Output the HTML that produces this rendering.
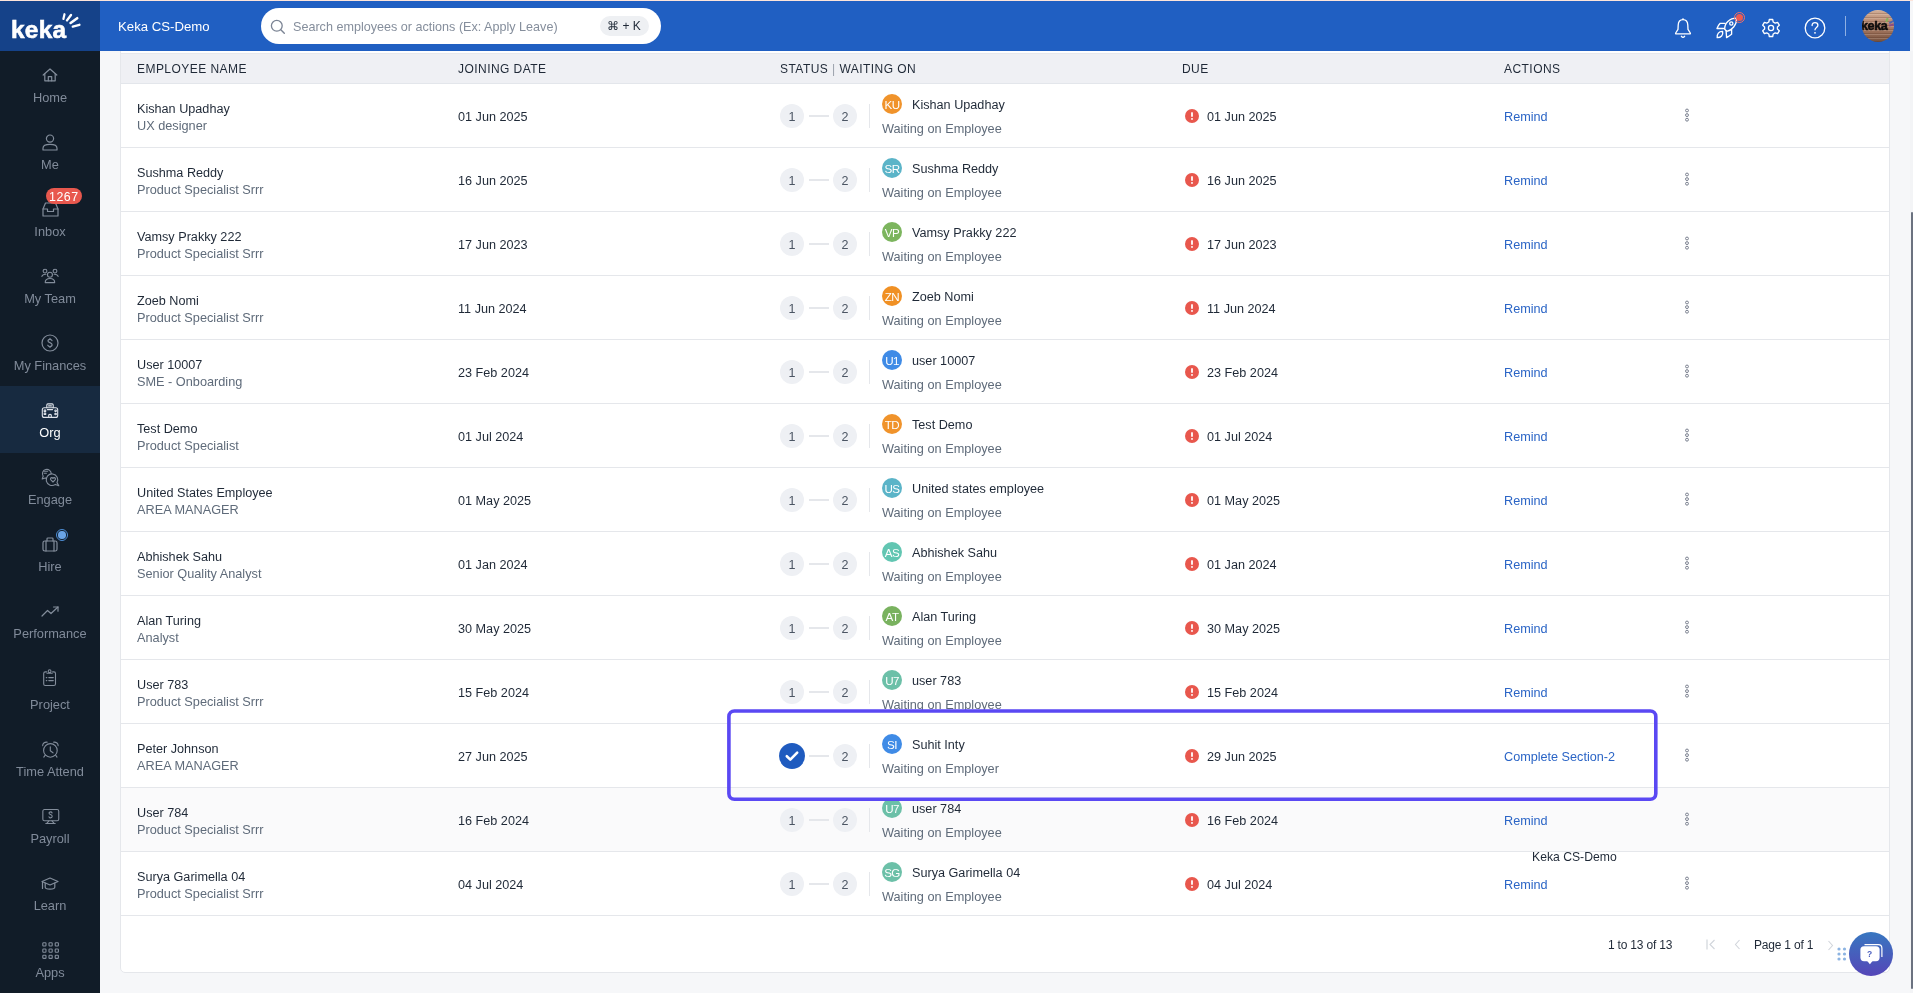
<!DOCTYPE html><html><head><meta charset="utf-8"><title>Keka</title><style>
*{box-sizing:border-box;margin:0;padding:0}
html,body{width:1913px;height:993px;overflow:hidden}
body{position:relative;background:#f6f7f9;font-family:"Liberation Sans", sans-serif}
.t{position:absolute;white-space:nowrap}
.a{position:absolute}
svg{position:absolute;overflow:visible}
</style></head><body><div id="root" style="position:absolute;left:0;top:0;width:1913px;height:993px;will-change:transform">
<div class="a" style="left:120px;top:40px;width:1770px;height:933px;background:#fff;border:1px solid #e5e7eb;border-radius:5px"></div>
<div class="a" style="left:121px;top:53px;width:1768px;height:31px;background:#eff0f4;border-top:1px solid #e6e8ec;border-bottom:1px solid #e3e6eb"></div>
<div class="t" style="left:137px;top:60.74px;font-size:12px;line-height:16px;color:#1f2937;font-weight:400;letter-spacing:0.45px;">EMPLOYEE NAME</div>
<div class="t" style="left:458px;top:60.74px;font-size:12px;line-height:16px;color:#1f2937;font-weight:400;letter-spacing:0.45px;">JOINING DATE</div>
<div class="t" style="left:780px;top:60.74px;font-size:12px;line-height:16px;color:#1f2937;font-weight:400;letter-spacing:0.45px;">STATUS <span style="color:#9aa1ab">|</span> WAITING ON</div>
<div class="t" style="left:1182px;top:60.74px;font-size:12px;line-height:16px;color:#1f2937;font-weight:400;letter-spacing:0.45px;">DUE</div>
<div class="t" style="left:1504px;top:60.74px;font-size:12px;line-height:16px;color:#1f2937;font-weight:400;letter-spacing:0.45px;">ACTIONS</div>
<div class="a" style="left:121px;top:84px;width:1768px;height:64px;background:#fff;border-bottom:1px solid #e5e7eb"></div>
<div class="t" style="left:137px;top:100.62px;font-size:12.65px;line-height:16px;color:#1f2937;font-weight:400;letter-spacing:0px;">Kishan Upadhay</div>
<div class="t" style="left:137px;top:116.89px;font-size:12.72px;line-height:17px;color:#5f6b7a;font-weight:400;letter-spacing:0px;">UX designer</div>
<div class="t" style="left:458px;top:108.62px;font-size:12.65px;line-height:16px;color:#1f2937;font-weight:400;letter-spacing:0px;">01 Jun 2025</div>
<div class="a" style="left:780px;top:104px;width:24px;height:24px;border-radius:50%;background:#eef0f4"></div>
<div class="t" style="left:642px;width:300px;text-align:center;top:108.77px;font-size:12.5px;line-height:16px;color:#4b5563;font-weight:400;letter-spacing:0px;">1</div>
<div class="a" style="left:809px;top:115px;width:20px;height:2px;background:#e5e7eb"></div>
<div class="a" style="left:833px;top:104px;width:24px;height:24px;border-radius:50%;background:#eef0f4"></div>
<div class="t" style="left:695px;width:300px;text-align:center;top:108.77px;font-size:12.5px;line-height:16px;color:#4b5563;font-weight:400;letter-spacing:0px;">2</div>
<div class="a" style="left:869px;top:104px;width:1px;height:24px;background:#e5e7eb"></div>
<div class="a" style="left:882px;top:94px;width:20px;height:20px;border-radius:50%;background:#f0932b"></div>
<div class="t" style="left:742px;width:300px;text-align:center;top:96.88px;font-size:11.6px;line-height:15px;color:#fff;font-weight:400;letter-spacing:-0.6px;">KU</div>
<div class="t" style="left:912px;top:96.92px;font-size:12.65px;line-height:16px;color:#1f2937;font-weight:400;letter-spacing:0px;">Kishan Upadhay</div>
<div class="t" style="left:882px;top:120.19px;font-size:12.72px;line-height:17px;color:#5f6b7a;font-weight:400;letter-spacing:0px;">Waiting on Employee</div>
<svg style="left:1185px;top:109px" width="14" height="14" viewBox="0 0 14 14"><circle cx="7" cy="7" r="7" fill="#e8574d"/><rect x="6.1" y="3.2" width="1.8" height="4.6" rx="0.4" fill="#fff"/><rect x="6.1" y="9" width="1.8" height="1.8" rx="0.4" fill="#fff"/></svg>
<div class="t" style="left:1207px;top:108.62px;font-size:12.65px;line-height:16px;color:#1f2937;font-weight:400;letter-spacing:0px;">01 Jun 2025</div>
<div class="t" style="left:1504px;top:108.62px;font-size:12.65px;line-height:16px;color:#2b65c6;font-weight:400;letter-spacing:0px;">Remind</div>
<svg style="left:1684px;top:108px" width="6" height="14" viewBox="0 0 6 14"><circle cx="3" cy="2.5" r="1.45" fill="none" stroke="#7b8190" stroke-width="1"/><circle cx="3" cy="7.1" r="1.45" fill="none" stroke="#7b8190" stroke-width="1"/><circle cx="3" cy="11.7" r="1.45" fill="none" stroke="#7b8190" stroke-width="1"/></svg>
<div class="a" style="left:121px;top:148px;width:1768px;height:64px;background:#fff;border-bottom:1px solid #e5e7eb"></div>
<div class="t" style="left:137px;top:164.62px;font-size:12.65px;line-height:16px;color:#1f2937;font-weight:400;letter-spacing:0px;">Sushma Reddy</div>
<div class="t" style="left:137px;top:180.89px;font-size:12.72px;line-height:17px;color:#5f6b7a;font-weight:400;letter-spacing:0px;">Product Specialist Srrr</div>
<div class="t" style="left:458px;top:172.62px;font-size:12.65px;line-height:16px;color:#1f2937;font-weight:400;letter-spacing:0px;">16 Jun 2025</div>
<div class="a" style="left:780px;top:168px;width:24px;height:24px;border-radius:50%;background:#eef0f4"></div>
<div class="t" style="left:642px;width:300px;text-align:center;top:172.77px;font-size:12.5px;line-height:16px;color:#4b5563;font-weight:400;letter-spacing:0px;">1</div>
<div class="a" style="left:809px;top:179px;width:20px;height:2px;background:#e5e7eb"></div>
<div class="a" style="left:833px;top:168px;width:24px;height:24px;border-radius:50%;background:#eef0f4"></div>
<div class="t" style="left:695px;width:300px;text-align:center;top:172.77px;font-size:12.5px;line-height:16px;color:#4b5563;font-weight:400;letter-spacing:0px;">2</div>
<div class="a" style="left:869px;top:168px;width:1px;height:24px;background:#e5e7eb"></div>
<div class="a" style="left:882px;top:158px;width:20px;height:20px;border-radius:50%;background:#5bb4c8"></div>
<div class="t" style="left:742px;width:300px;text-align:center;top:160.88px;font-size:11.6px;line-height:15px;color:#fff;font-weight:400;letter-spacing:-0.6px;">SR</div>
<div class="t" style="left:912px;top:160.92px;font-size:12.65px;line-height:16px;color:#1f2937;font-weight:400;letter-spacing:0px;">Sushma Reddy</div>
<div class="t" style="left:882px;top:184.19px;font-size:12.72px;line-height:17px;color:#5f6b7a;font-weight:400;letter-spacing:0px;">Waiting on Employee</div>
<svg style="left:1185px;top:173px" width="14" height="14" viewBox="0 0 14 14"><circle cx="7" cy="7" r="7" fill="#e8574d"/><rect x="6.1" y="3.2" width="1.8" height="4.6" rx="0.4" fill="#fff"/><rect x="6.1" y="9" width="1.8" height="1.8" rx="0.4" fill="#fff"/></svg>
<div class="t" style="left:1207px;top:172.62px;font-size:12.65px;line-height:16px;color:#1f2937;font-weight:400;letter-spacing:0px;">16 Jun 2025</div>
<div class="t" style="left:1504px;top:172.62px;font-size:12.65px;line-height:16px;color:#2b65c6;font-weight:400;letter-spacing:0px;">Remind</div>
<svg style="left:1684px;top:172px" width="6" height="14" viewBox="0 0 6 14"><circle cx="3" cy="2.5" r="1.45" fill="none" stroke="#7b8190" stroke-width="1"/><circle cx="3" cy="7.1" r="1.45" fill="none" stroke="#7b8190" stroke-width="1"/><circle cx="3" cy="11.7" r="1.45" fill="none" stroke="#7b8190" stroke-width="1"/></svg>
<div class="a" style="left:121px;top:212px;width:1768px;height:64px;background:#fff;border-bottom:1px solid #e5e7eb"></div>
<div class="t" style="left:137px;top:228.62px;font-size:12.65px;line-height:16px;color:#1f2937;font-weight:400;letter-spacing:0px;">Vamsy Prakky 222</div>
<div class="t" style="left:137px;top:244.89px;font-size:12.72px;line-height:17px;color:#5f6b7a;font-weight:400;letter-spacing:0px;">Product Specialist Srrr</div>
<div class="t" style="left:458px;top:236.62px;font-size:12.65px;line-height:16px;color:#1f2937;font-weight:400;letter-spacing:0px;">17 Jun 2023</div>
<div class="a" style="left:780px;top:232px;width:24px;height:24px;border-radius:50%;background:#eef0f4"></div>
<div class="t" style="left:642px;width:300px;text-align:center;top:236.77px;font-size:12.5px;line-height:16px;color:#4b5563;font-weight:400;letter-spacing:0px;">1</div>
<div class="a" style="left:809px;top:243px;width:20px;height:2px;background:#e5e7eb"></div>
<div class="a" style="left:833px;top:232px;width:24px;height:24px;border-radius:50%;background:#eef0f4"></div>
<div class="t" style="left:695px;width:300px;text-align:center;top:236.77px;font-size:12.5px;line-height:16px;color:#4b5563;font-weight:400;letter-spacing:0px;">2</div>
<div class="a" style="left:869px;top:232px;width:1px;height:24px;background:#e5e7eb"></div>
<div class="a" style="left:882px;top:222px;width:20px;height:20px;border-radius:50%;background:#7cb55e"></div>
<div class="t" style="left:742px;width:300px;text-align:center;top:224.88px;font-size:11.6px;line-height:15px;color:#fff;font-weight:400;letter-spacing:-0.6px;">VP</div>
<div class="t" style="left:912px;top:224.92px;font-size:12.65px;line-height:16px;color:#1f2937;font-weight:400;letter-spacing:0px;">Vamsy Prakky 222</div>
<div class="t" style="left:882px;top:248.19px;font-size:12.72px;line-height:17px;color:#5f6b7a;font-weight:400;letter-spacing:0px;">Waiting on Employee</div>
<svg style="left:1185px;top:237px" width="14" height="14" viewBox="0 0 14 14"><circle cx="7" cy="7" r="7" fill="#e8574d"/><rect x="6.1" y="3.2" width="1.8" height="4.6" rx="0.4" fill="#fff"/><rect x="6.1" y="9" width="1.8" height="1.8" rx="0.4" fill="#fff"/></svg>
<div class="t" style="left:1207px;top:236.62px;font-size:12.65px;line-height:16px;color:#1f2937;font-weight:400;letter-spacing:0px;">17 Jun 2023</div>
<div class="t" style="left:1504px;top:236.62px;font-size:12.65px;line-height:16px;color:#2b65c6;font-weight:400;letter-spacing:0px;">Remind</div>
<svg style="left:1684px;top:236px" width="6" height="14" viewBox="0 0 6 14"><circle cx="3" cy="2.5" r="1.45" fill="none" stroke="#7b8190" stroke-width="1"/><circle cx="3" cy="7.1" r="1.45" fill="none" stroke="#7b8190" stroke-width="1"/><circle cx="3" cy="11.7" r="1.45" fill="none" stroke="#7b8190" stroke-width="1"/></svg>
<div class="a" style="left:121px;top:276px;width:1768px;height:64px;background:#fff;border-bottom:1px solid #e5e7eb"></div>
<div class="t" style="left:137px;top:292.62px;font-size:12.65px;line-height:16px;color:#1f2937;font-weight:400;letter-spacing:0px;">Zoeb Nomi</div>
<div class="t" style="left:137px;top:308.89px;font-size:12.72px;line-height:17px;color:#5f6b7a;font-weight:400;letter-spacing:0px;">Product Specialist Srrr</div>
<div class="t" style="left:458px;top:300.62px;font-size:12.65px;line-height:16px;color:#1f2937;font-weight:400;letter-spacing:0px;">11 Jun 2024</div>
<div class="a" style="left:780px;top:296px;width:24px;height:24px;border-radius:50%;background:#eef0f4"></div>
<div class="t" style="left:642px;width:300px;text-align:center;top:300.77px;font-size:12.5px;line-height:16px;color:#4b5563;font-weight:400;letter-spacing:0px;">1</div>
<div class="a" style="left:809px;top:307px;width:20px;height:2px;background:#e5e7eb"></div>
<div class="a" style="left:833px;top:296px;width:24px;height:24px;border-radius:50%;background:#eef0f4"></div>
<div class="t" style="left:695px;width:300px;text-align:center;top:300.77px;font-size:12.5px;line-height:16px;color:#4b5563;font-weight:400;letter-spacing:0px;">2</div>
<div class="a" style="left:869px;top:296px;width:1px;height:24px;background:#e5e7eb"></div>
<div class="a" style="left:882px;top:286px;width:20px;height:20px;border-radius:50%;background:#f09024"></div>
<div class="t" style="left:742px;width:300px;text-align:center;top:288.88px;font-size:11.6px;line-height:15px;color:#fff;font-weight:400;letter-spacing:-0.6px;">ZN</div>
<div class="t" style="left:912px;top:288.92px;font-size:12.65px;line-height:16px;color:#1f2937;font-weight:400;letter-spacing:0px;">Zoeb Nomi</div>
<div class="t" style="left:882px;top:312.19px;font-size:12.72px;line-height:17px;color:#5f6b7a;font-weight:400;letter-spacing:0px;">Waiting on Employee</div>
<svg style="left:1185px;top:301px" width="14" height="14" viewBox="0 0 14 14"><circle cx="7" cy="7" r="7" fill="#e8574d"/><rect x="6.1" y="3.2" width="1.8" height="4.6" rx="0.4" fill="#fff"/><rect x="6.1" y="9" width="1.8" height="1.8" rx="0.4" fill="#fff"/></svg>
<div class="t" style="left:1207px;top:300.62px;font-size:12.65px;line-height:16px;color:#1f2937;font-weight:400;letter-spacing:0px;">11 Jun 2024</div>
<div class="t" style="left:1504px;top:300.62px;font-size:12.65px;line-height:16px;color:#2b65c6;font-weight:400;letter-spacing:0px;">Remind</div>
<svg style="left:1684px;top:300px" width="6" height="14" viewBox="0 0 6 14"><circle cx="3" cy="2.5" r="1.45" fill="none" stroke="#7b8190" stroke-width="1"/><circle cx="3" cy="7.1" r="1.45" fill="none" stroke="#7b8190" stroke-width="1"/><circle cx="3" cy="11.7" r="1.45" fill="none" stroke="#7b8190" stroke-width="1"/></svg>
<div class="a" style="left:121px;top:340px;width:1768px;height:64px;background:#fff;border-bottom:1px solid #e5e7eb"></div>
<div class="t" style="left:137px;top:356.62px;font-size:12.65px;line-height:16px;color:#1f2937;font-weight:400;letter-spacing:0px;">User 10007</div>
<div class="t" style="left:137px;top:372.89px;font-size:12.72px;line-height:17px;color:#5f6b7a;font-weight:400;letter-spacing:0px;">SME - Onboarding</div>
<div class="t" style="left:458px;top:364.62px;font-size:12.65px;line-height:16px;color:#1f2937;font-weight:400;letter-spacing:0px;">23 Feb 2024</div>
<div class="a" style="left:780px;top:360px;width:24px;height:24px;border-radius:50%;background:#eef0f4"></div>
<div class="t" style="left:642px;width:300px;text-align:center;top:364.77px;font-size:12.5px;line-height:16px;color:#4b5563;font-weight:400;letter-spacing:0px;">1</div>
<div class="a" style="left:809px;top:371px;width:20px;height:2px;background:#e5e7eb"></div>
<div class="a" style="left:833px;top:360px;width:24px;height:24px;border-radius:50%;background:#eef0f4"></div>
<div class="t" style="left:695px;width:300px;text-align:center;top:364.77px;font-size:12.5px;line-height:16px;color:#4b5563;font-weight:400;letter-spacing:0px;">2</div>
<div class="a" style="left:869px;top:360px;width:1px;height:24px;background:#e5e7eb"></div>
<div class="a" style="left:882px;top:350px;width:20px;height:20px;border-radius:50%;background:#3f8be6"></div>
<div class="t" style="left:742px;width:300px;text-align:center;top:352.88px;font-size:11.6px;line-height:15px;color:#fff;font-weight:400;letter-spacing:-0.6px;">U1</div>
<div class="t" style="left:912px;top:352.92px;font-size:12.65px;line-height:16px;color:#1f2937;font-weight:400;letter-spacing:0px;">user 10007</div>
<div class="t" style="left:882px;top:376.19px;font-size:12.72px;line-height:17px;color:#5f6b7a;font-weight:400;letter-spacing:0px;">Waiting on Employee</div>
<svg style="left:1185px;top:365px" width="14" height="14" viewBox="0 0 14 14"><circle cx="7" cy="7" r="7" fill="#e8574d"/><rect x="6.1" y="3.2" width="1.8" height="4.6" rx="0.4" fill="#fff"/><rect x="6.1" y="9" width="1.8" height="1.8" rx="0.4" fill="#fff"/></svg>
<div class="t" style="left:1207px;top:364.62px;font-size:12.65px;line-height:16px;color:#1f2937;font-weight:400;letter-spacing:0px;">23 Feb 2024</div>
<div class="t" style="left:1504px;top:364.62px;font-size:12.65px;line-height:16px;color:#2b65c6;font-weight:400;letter-spacing:0px;">Remind</div>
<svg style="left:1684px;top:364px" width="6" height="14" viewBox="0 0 6 14"><circle cx="3" cy="2.5" r="1.45" fill="none" stroke="#7b8190" stroke-width="1"/><circle cx="3" cy="7.1" r="1.45" fill="none" stroke="#7b8190" stroke-width="1"/><circle cx="3" cy="11.7" r="1.45" fill="none" stroke="#7b8190" stroke-width="1"/></svg>
<div class="a" style="left:121px;top:404px;width:1768px;height:64px;background:#fff;border-bottom:1px solid #e5e7eb"></div>
<div class="t" style="left:137px;top:420.62px;font-size:12.65px;line-height:16px;color:#1f2937;font-weight:400;letter-spacing:0px;">Test Demo</div>
<div class="t" style="left:137px;top:436.89px;font-size:12.72px;line-height:17px;color:#5f6b7a;font-weight:400;letter-spacing:0px;">Product Specialist</div>
<div class="t" style="left:458px;top:428.62px;font-size:12.65px;line-height:16px;color:#1f2937;font-weight:400;letter-spacing:0px;">01 Jul 2024</div>
<div class="a" style="left:780px;top:424px;width:24px;height:24px;border-radius:50%;background:#eef0f4"></div>
<div class="t" style="left:642px;width:300px;text-align:center;top:428.77px;font-size:12.5px;line-height:16px;color:#4b5563;font-weight:400;letter-spacing:0px;">1</div>
<div class="a" style="left:809px;top:435px;width:20px;height:2px;background:#e5e7eb"></div>
<div class="a" style="left:833px;top:424px;width:24px;height:24px;border-radius:50%;background:#eef0f4"></div>
<div class="t" style="left:695px;width:300px;text-align:center;top:428.77px;font-size:12.5px;line-height:16px;color:#4b5563;font-weight:400;letter-spacing:0px;">2</div>
<div class="a" style="left:869px;top:424px;width:1px;height:24px;background:#e5e7eb"></div>
<div class="a" style="left:882px;top:414px;width:20px;height:20px;border-radius:50%;background:#f0932b"></div>
<div class="t" style="left:742px;width:300px;text-align:center;top:416.88px;font-size:11.6px;line-height:15px;color:#fff;font-weight:400;letter-spacing:-0.6px;">TD</div>
<div class="t" style="left:912px;top:416.92px;font-size:12.65px;line-height:16px;color:#1f2937;font-weight:400;letter-spacing:0px;">Test Demo</div>
<div class="t" style="left:882px;top:440.19px;font-size:12.72px;line-height:17px;color:#5f6b7a;font-weight:400;letter-spacing:0px;">Waiting on Employee</div>
<svg style="left:1185px;top:429px" width="14" height="14" viewBox="0 0 14 14"><circle cx="7" cy="7" r="7" fill="#e8574d"/><rect x="6.1" y="3.2" width="1.8" height="4.6" rx="0.4" fill="#fff"/><rect x="6.1" y="9" width="1.8" height="1.8" rx="0.4" fill="#fff"/></svg>
<div class="t" style="left:1207px;top:428.62px;font-size:12.65px;line-height:16px;color:#1f2937;font-weight:400;letter-spacing:0px;">01 Jul 2024</div>
<div class="t" style="left:1504px;top:428.62px;font-size:12.65px;line-height:16px;color:#2b65c6;font-weight:400;letter-spacing:0px;">Remind</div>
<svg style="left:1684px;top:428px" width="6" height="14" viewBox="0 0 6 14"><circle cx="3" cy="2.5" r="1.45" fill="none" stroke="#7b8190" stroke-width="1"/><circle cx="3" cy="7.1" r="1.45" fill="none" stroke="#7b8190" stroke-width="1"/><circle cx="3" cy="11.7" r="1.45" fill="none" stroke="#7b8190" stroke-width="1"/></svg>
<div class="a" style="left:121px;top:468px;width:1768px;height:64px;background:#fff;border-bottom:1px solid #e5e7eb"></div>
<div class="t" style="left:137px;top:484.62px;font-size:12.65px;line-height:16px;color:#1f2937;font-weight:400;letter-spacing:0px;">United States Employee</div>
<div class="t" style="left:137px;top:500.89px;font-size:12.72px;line-height:17px;color:#5f6b7a;font-weight:400;letter-spacing:0px;">AREA MANAGER</div>
<div class="t" style="left:458px;top:492.62px;font-size:12.65px;line-height:16px;color:#1f2937;font-weight:400;letter-spacing:0px;">01 May 2025</div>
<div class="a" style="left:780px;top:488px;width:24px;height:24px;border-radius:50%;background:#eef0f4"></div>
<div class="t" style="left:642px;width:300px;text-align:center;top:492.77px;font-size:12.5px;line-height:16px;color:#4b5563;font-weight:400;letter-spacing:0px;">1</div>
<div class="a" style="left:809px;top:499px;width:20px;height:2px;background:#e5e7eb"></div>
<div class="a" style="left:833px;top:488px;width:24px;height:24px;border-radius:50%;background:#eef0f4"></div>
<div class="t" style="left:695px;width:300px;text-align:center;top:492.77px;font-size:12.5px;line-height:16px;color:#4b5563;font-weight:400;letter-spacing:0px;">2</div>
<div class="a" style="left:869px;top:488px;width:1px;height:24px;background:#e5e7eb"></div>
<div class="a" style="left:882px;top:478px;width:20px;height:20px;border-radius:50%;background:#5bb4c8"></div>
<div class="t" style="left:742px;width:300px;text-align:center;top:480.88px;font-size:11.6px;line-height:15px;color:#fff;font-weight:400;letter-spacing:-0.6px;">US</div>
<div class="t" style="left:912px;top:480.92px;font-size:12.65px;line-height:16px;color:#1f2937;font-weight:400;letter-spacing:0px;">United states employee</div>
<div class="t" style="left:882px;top:504.19px;font-size:12.72px;line-height:17px;color:#5f6b7a;font-weight:400;letter-spacing:0px;">Waiting on Employee</div>
<svg style="left:1185px;top:493px" width="14" height="14" viewBox="0 0 14 14"><circle cx="7" cy="7" r="7" fill="#e8574d"/><rect x="6.1" y="3.2" width="1.8" height="4.6" rx="0.4" fill="#fff"/><rect x="6.1" y="9" width="1.8" height="1.8" rx="0.4" fill="#fff"/></svg>
<div class="t" style="left:1207px;top:492.62px;font-size:12.65px;line-height:16px;color:#1f2937;font-weight:400;letter-spacing:0px;">01 May 2025</div>
<div class="t" style="left:1504px;top:492.62px;font-size:12.65px;line-height:16px;color:#2b65c6;font-weight:400;letter-spacing:0px;">Remind</div>
<svg style="left:1684px;top:492px" width="6" height="14" viewBox="0 0 6 14"><circle cx="3" cy="2.5" r="1.45" fill="none" stroke="#7b8190" stroke-width="1"/><circle cx="3" cy="7.1" r="1.45" fill="none" stroke="#7b8190" stroke-width="1"/><circle cx="3" cy="11.7" r="1.45" fill="none" stroke="#7b8190" stroke-width="1"/></svg>
<div class="a" style="left:121px;top:532px;width:1768px;height:64px;background:#fff;border-bottom:1px solid #e5e7eb"></div>
<div class="t" style="left:137px;top:548.62px;font-size:12.65px;line-height:16px;color:#1f2937;font-weight:400;letter-spacing:0px;">Abhishek Sahu</div>
<div class="t" style="left:137px;top:564.89px;font-size:12.72px;line-height:17px;color:#5f6b7a;font-weight:400;letter-spacing:0px;">Senior Quality Analyst</div>
<div class="t" style="left:458px;top:556.62px;font-size:12.65px;line-height:16px;color:#1f2937;font-weight:400;letter-spacing:0px;">01 Jan 2024</div>
<div class="a" style="left:780px;top:552px;width:24px;height:24px;border-radius:50%;background:#eef0f4"></div>
<div class="t" style="left:642px;width:300px;text-align:center;top:556.77px;font-size:12.5px;line-height:16px;color:#4b5563;font-weight:400;letter-spacing:0px;">1</div>
<div class="a" style="left:809px;top:563px;width:20px;height:2px;background:#e5e7eb"></div>
<div class="a" style="left:833px;top:552px;width:24px;height:24px;border-radius:50%;background:#eef0f4"></div>
<div class="t" style="left:695px;width:300px;text-align:center;top:556.77px;font-size:12.5px;line-height:16px;color:#4b5563;font-weight:400;letter-spacing:0px;">2</div>
<div class="a" style="left:869px;top:552px;width:1px;height:24px;background:#e5e7eb"></div>
<div class="a" style="left:882px;top:542px;width:20px;height:20px;border-radius:50%;background:#62c6b2"></div>
<div class="t" style="left:742px;width:300px;text-align:center;top:544.88px;font-size:11.6px;line-height:15px;color:#fff;font-weight:400;letter-spacing:-0.6px;">AS</div>
<div class="t" style="left:912px;top:544.92px;font-size:12.65px;line-height:16px;color:#1f2937;font-weight:400;letter-spacing:0px;">Abhishek Sahu</div>
<div class="t" style="left:882px;top:568.19px;font-size:12.72px;line-height:17px;color:#5f6b7a;font-weight:400;letter-spacing:0px;">Waiting on Employee</div>
<svg style="left:1185px;top:557px" width="14" height="14" viewBox="0 0 14 14"><circle cx="7" cy="7" r="7" fill="#e8574d"/><rect x="6.1" y="3.2" width="1.8" height="4.6" rx="0.4" fill="#fff"/><rect x="6.1" y="9" width="1.8" height="1.8" rx="0.4" fill="#fff"/></svg>
<div class="t" style="left:1207px;top:556.62px;font-size:12.65px;line-height:16px;color:#1f2937;font-weight:400;letter-spacing:0px;">01 Jan 2024</div>
<div class="t" style="left:1504px;top:556.62px;font-size:12.65px;line-height:16px;color:#2b65c6;font-weight:400;letter-spacing:0px;">Remind</div>
<svg style="left:1684px;top:556px" width="6" height="14" viewBox="0 0 6 14"><circle cx="3" cy="2.5" r="1.45" fill="none" stroke="#7b8190" stroke-width="1"/><circle cx="3" cy="7.1" r="1.45" fill="none" stroke="#7b8190" stroke-width="1"/><circle cx="3" cy="11.7" r="1.45" fill="none" stroke="#7b8190" stroke-width="1"/></svg>
<div class="a" style="left:121px;top:596px;width:1768px;height:64px;background:#fff;border-bottom:1px solid #e5e7eb"></div>
<div class="t" style="left:137px;top:612.62px;font-size:12.65px;line-height:16px;color:#1f2937;font-weight:400;letter-spacing:0px;">Alan Turing</div>
<div class="t" style="left:137px;top:628.89px;font-size:12.72px;line-height:17px;color:#5f6b7a;font-weight:400;letter-spacing:0px;">Analyst</div>
<div class="t" style="left:458px;top:620.62px;font-size:12.65px;line-height:16px;color:#1f2937;font-weight:400;letter-spacing:0px;">30 May 2025</div>
<div class="a" style="left:780px;top:616px;width:24px;height:24px;border-radius:50%;background:#eef0f4"></div>
<div class="t" style="left:642px;width:300px;text-align:center;top:620.77px;font-size:12.5px;line-height:16px;color:#4b5563;font-weight:400;letter-spacing:0px;">1</div>
<div class="a" style="left:809px;top:627px;width:20px;height:2px;background:#e5e7eb"></div>
<div class="a" style="left:833px;top:616px;width:24px;height:24px;border-radius:50%;background:#eef0f4"></div>
<div class="t" style="left:695px;width:300px;text-align:center;top:620.77px;font-size:12.5px;line-height:16px;color:#4b5563;font-weight:400;letter-spacing:0px;">2</div>
<div class="a" style="left:869px;top:616px;width:1px;height:24px;background:#e5e7eb"></div>
<div class="a" style="left:882px;top:606px;width:20px;height:20px;border-radius:50%;background:#79b25f"></div>
<div class="t" style="left:742px;width:300px;text-align:center;top:608.88px;font-size:11.6px;line-height:15px;color:#fff;font-weight:400;letter-spacing:-0.6px;">AT</div>
<div class="t" style="left:912px;top:608.92px;font-size:12.65px;line-height:16px;color:#1f2937;font-weight:400;letter-spacing:0px;">Alan Turing</div>
<div class="t" style="left:882px;top:632.19px;font-size:12.72px;line-height:17px;color:#5f6b7a;font-weight:400;letter-spacing:0px;">Waiting on Employee</div>
<svg style="left:1185px;top:621px" width="14" height="14" viewBox="0 0 14 14"><circle cx="7" cy="7" r="7" fill="#e8574d"/><rect x="6.1" y="3.2" width="1.8" height="4.6" rx="0.4" fill="#fff"/><rect x="6.1" y="9" width="1.8" height="1.8" rx="0.4" fill="#fff"/></svg>
<div class="t" style="left:1207px;top:620.62px;font-size:12.65px;line-height:16px;color:#1f2937;font-weight:400;letter-spacing:0px;">30 May 2025</div>
<div class="t" style="left:1504px;top:620.62px;font-size:12.65px;line-height:16px;color:#2b65c6;font-weight:400;letter-spacing:0px;">Remind</div>
<svg style="left:1684px;top:620px" width="6" height="14" viewBox="0 0 6 14"><circle cx="3" cy="2.5" r="1.45" fill="none" stroke="#7b8190" stroke-width="1"/><circle cx="3" cy="7.1" r="1.45" fill="none" stroke="#7b8190" stroke-width="1"/><circle cx="3" cy="11.7" r="1.45" fill="none" stroke="#7b8190" stroke-width="1"/></svg>
<div class="a" style="left:121px;top:660px;width:1768px;height:64px;background:#fff;border-bottom:1px solid #e5e7eb"></div>
<div class="t" style="left:137px;top:676.62px;font-size:12.65px;line-height:16px;color:#1f2937;font-weight:400;letter-spacing:0px;">User 783</div>
<div class="t" style="left:137px;top:692.89px;font-size:12.72px;line-height:17px;color:#5f6b7a;font-weight:400;letter-spacing:0px;">Product Specialist Srrr</div>
<div class="t" style="left:458px;top:684.62px;font-size:12.65px;line-height:16px;color:#1f2937;font-weight:400;letter-spacing:0px;">15 Feb 2024</div>
<div class="a" style="left:780px;top:680px;width:24px;height:24px;border-radius:50%;background:#eef0f4"></div>
<div class="t" style="left:642px;width:300px;text-align:center;top:684.77px;font-size:12.5px;line-height:16px;color:#4b5563;font-weight:400;letter-spacing:0px;">1</div>
<div class="a" style="left:809px;top:691px;width:20px;height:2px;background:#e5e7eb"></div>
<div class="a" style="left:833px;top:680px;width:24px;height:24px;border-radius:50%;background:#eef0f4"></div>
<div class="t" style="left:695px;width:300px;text-align:center;top:684.77px;font-size:12.5px;line-height:16px;color:#4b5563;font-weight:400;letter-spacing:0px;">2</div>
<div class="a" style="left:869px;top:680px;width:1px;height:24px;background:#e5e7eb"></div>
<div class="a" style="left:882px;top:670px;width:20px;height:20px;border-radius:50%;background:#6cc0a8"></div>
<div class="t" style="left:742px;width:300px;text-align:center;top:672.88px;font-size:11.6px;line-height:15px;color:#fff;font-weight:400;letter-spacing:-0.6px;">U7</div>
<div class="t" style="left:912px;top:672.92px;font-size:12.65px;line-height:16px;color:#1f2937;font-weight:400;letter-spacing:0px;">user 783</div>
<div class="t" style="left:882px;top:696.19px;font-size:12.72px;line-height:17px;color:#5f6b7a;font-weight:400;letter-spacing:0px;">Waiting on Employee</div>
<svg style="left:1185px;top:685px" width="14" height="14" viewBox="0 0 14 14"><circle cx="7" cy="7" r="7" fill="#e8574d"/><rect x="6.1" y="3.2" width="1.8" height="4.6" rx="0.4" fill="#fff"/><rect x="6.1" y="9" width="1.8" height="1.8" rx="0.4" fill="#fff"/></svg>
<div class="t" style="left:1207px;top:684.62px;font-size:12.65px;line-height:16px;color:#1f2937;font-weight:400;letter-spacing:0px;">15 Feb 2024</div>
<div class="t" style="left:1504px;top:684.62px;font-size:12.65px;line-height:16px;color:#2b65c6;font-weight:400;letter-spacing:0px;">Remind</div>
<svg style="left:1684px;top:684px" width="6" height="14" viewBox="0 0 6 14"><circle cx="3" cy="2.5" r="1.45" fill="none" stroke="#7b8190" stroke-width="1"/><circle cx="3" cy="7.1" r="1.45" fill="none" stroke="#7b8190" stroke-width="1"/><circle cx="3" cy="11.7" r="1.45" fill="none" stroke="#7b8190" stroke-width="1"/></svg>
<div class="a" style="left:121px;top:724px;width:1768px;height:64px;background:#fff;border-bottom:1px solid #e5e7eb"></div>
<div class="t" style="left:137px;top:740.62px;font-size:12.65px;line-height:16px;color:#1f2937;font-weight:400;letter-spacing:0px;">Peter Johnson</div>
<div class="t" style="left:137px;top:756.89px;font-size:12.72px;line-height:17px;color:#5f6b7a;font-weight:400;letter-spacing:0px;">AREA MANAGER</div>
<div class="t" style="left:458px;top:748.62px;font-size:12.65px;line-height:16px;color:#1f2937;font-weight:400;letter-spacing:0px;">27 Jun 2025</div>
<svg style="left:779px;top:743px" width="26" height="26" viewBox="0 0 26 26"><circle cx="13" cy="13" r="13" fill="#1f5bbf"/><path d="M7.8 13.2 L11.3 16.6 L18.2 9.6" fill="none" stroke="#fff" stroke-width="2.6" stroke-linecap="round" stroke-linejoin="round"/></svg>
<div class="a" style="left:809px;top:755px;width:20px;height:2px;background:#e5e7eb"></div>
<div class="a" style="left:833px;top:744px;width:24px;height:24px;border-radius:50%;background:#eef0f4"></div>
<div class="t" style="left:695px;width:300px;text-align:center;top:748.77px;font-size:12.5px;line-height:16px;color:#4b5563;font-weight:400;letter-spacing:0px;">2</div>
<div class="a" style="left:869px;top:744px;width:1px;height:24px;background:#e5e7eb"></div>
<div class="a" style="left:882px;top:734px;width:20px;height:20px;border-radius:50%;background:#3f8be6"></div>
<div class="t" style="left:742px;width:300px;text-align:center;top:736.88px;font-size:11.6px;line-height:15px;color:#fff;font-weight:400;letter-spacing:-0.6px;">SI</div>
<div class="t" style="left:912px;top:736.92px;font-size:12.65px;line-height:16px;color:#1f2937;font-weight:400;letter-spacing:0px;">Suhit Inty</div>
<div class="t" style="left:882px;top:760.19px;font-size:12.72px;line-height:17px;color:#5f6b7a;font-weight:400;letter-spacing:0px;">Waiting on Employer</div>
<svg style="left:1185px;top:749px" width="14" height="14" viewBox="0 0 14 14"><circle cx="7" cy="7" r="7" fill="#e8574d"/><rect x="6.1" y="3.2" width="1.8" height="4.6" rx="0.4" fill="#fff"/><rect x="6.1" y="9" width="1.8" height="1.8" rx="0.4" fill="#fff"/></svg>
<div class="t" style="left:1207px;top:748.62px;font-size:12.65px;line-height:16px;color:#1f2937;font-weight:400;letter-spacing:0px;">29 Jun 2025</div>
<div class="t" style="left:1504px;top:748.62px;font-size:12.65px;line-height:16px;color:#2b65c6;font-weight:400;letter-spacing:0px;">Complete Section-2</div>
<svg style="left:1684px;top:748px" width="6" height="14" viewBox="0 0 6 14"><circle cx="3" cy="2.5" r="1.45" fill="none" stroke="#7b8190" stroke-width="1"/><circle cx="3" cy="7.1" r="1.45" fill="none" stroke="#7b8190" stroke-width="1"/><circle cx="3" cy="11.7" r="1.45" fill="none" stroke="#7b8190" stroke-width="1"/></svg>
<div class="a" style="left:121px;top:788px;width:1768px;height:64px;background:#fafafb;border-bottom:1px solid #e5e7eb"></div>
<div class="t" style="left:137px;top:804.62px;font-size:12.65px;line-height:16px;color:#1f2937;font-weight:400;letter-spacing:0px;">User 784</div>
<div class="t" style="left:137px;top:820.89px;font-size:12.72px;line-height:17px;color:#5f6b7a;font-weight:400;letter-spacing:0px;">Product Specialist Srrr</div>
<div class="t" style="left:458px;top:812.62px;font-size:12.65px;line-height:16px;color:#1f2937;font-weight:400;letter-spacing:0px;">16 Feb 2024</div>
<div class="a" style="left:780px;top:808px;width:24px;height:24px;border-radius:50%;background:#eef0f4"></div>
<div class="t" style="left:642px;width:300px;text-align:center;top:812.77px;font-size:12.5px;line-height:16px;color:#4b5563;font-weight:400;letter-spacing:0px;">1</div>
<div class="a" style="left:809px;top:819px;width:20px;height:2px;background:#e5e7eb"></div>
<div class="a" style="left:833px;top:808px;width:24px;height:24px;border-radius:50%;background:#eef0f4"></div>
<div class="t" style="left:695px;width:300px;text-align:center;top:812.77px;font-size:12.5px;line-height:16px;color:#4b5563;font-weight:400;letter-spacing:0px;">2</div>
<div class="a" style="left:869px;top:808px;width:1px;height:24px;background:#e5e7eb"></div>
<div class="a" style="left:882px;top:798px;width:20px;height:20px;border-radius:50%;background:#6cc0a8"></div>
<div class="t" style="left:742px;width:300px;text-align:center;top:800.88px;font-size:11.6px;line-height:15px;color:#fff;font-weight:400;letter-spacing:-0.6px;">U7</div>
<div class="t" style="left:912px;top:800.92px;font-size:12.65px;line-height:16px;color:#1f2937;font-weight:400;letter-spacing:0px;">user 784</div>
<div class="t" style="left:882px;top:824.19px;font-size:12.72px;line-height:17px;color:#5f6b7a;font-weight:400;letter-spacing:0px;">Waiting on Employee</div>
<svg style="left:1185px;top:813px" width="14" height="14" viewBox="0 0 14 14"><circle cx="7" cy="7" r="7" fill="#e8574d"/><rect x="6.1" y="3.2" width="1.8" height="4.6" rx="0.4" fill="#fff"/><rect x="6.1" y="9" width="1.8" height="1.8" rx="0.4" fill="#fff"/></svg>
<div class="t" style="left:1207px;top:812.62px;font-size:12.65px;line-height:16px;color:#1f2937;font-weight:400;letter-spacing:0px;">16 Feb 2024</div>
<div class="t" style="left:1504px;top:812.62px;font-size:12.65px;line-height:16px;color:#2b65c6;font-weight:400;letter-spacing:0px;">Remind</div>
<svg style="left:1684px;top:812px" width="6" height="14" viewBox="0 0 6 14"><circle cx="3" cy="2.5" r="1.45" fill="none" stroke="#7b8190" stroke-width="1"/><circle cx="3" cy="7.1" r="1.45" fill="none" stroke="#7b8190" stroke-width="1"/><circle cx="3" cy="11.7" r="1.45" fill="none" stroke="#7b8190" stroke-width="1"/></svg>
<div class="a" style="left:121px;top:852px;width:1768px;height:64px;background:#fff;border-bottom:1px solid #e5e7eb"></div>
<div class="t" style="left:137px;top:868.62px;font-size:12.65px;line-height:16px;color:#1f2937;font-weight:400;letter-spacing:0px;">Surya Garimella 04</div>
<div class="t" style="left:137px;top:884.89px;font-size:12.72px;line-height:17px;color:#5f6b7a;font-weight:400;letter-spacing:0px;">Product Specialist Srrr</div>
<div class="t" style="left:458px;top:876.62px;font-size:12.65px;line-height:16px;color:#1f2937;font-weight:400;letter-spacing:0px;">04 Jul 2024</div>
<div class="a" style="left:780px;top:872px;width:24px;height:24px;border-radius:50%;background:#eef0f4"></div>
<div class="t" style="left:642px;width:300px;text-align:center;top:876.77px;font-size:12.5px;line-height:16px;color:#4b5563;font-weight:400;letter-spacing:0px;">1</div>
<div class="a" style="left:809px;top:883px;width:20px;height:2px;background:#e5e7eb"></div>
<div class="a" style="left:833px;top:872px;width:24px;height:24px;border-radius:50%;background:#eef0f4"></div>
<div class="t" style="left:695px;width:300px;text-align:center;top:876.77px;font-size:12.5px;line-height:16px;color:#4b5563;font-weight:400;letter-spacing:0px;">2</div>
<div class="a" style="left:869px;top:872px;width:1px;height:24px;background:#e5e7eb"></div>
<div class="a" style="left:882px;top:862px;width:20px;height:20px;border-radius:50%;background:#6cc0a8"></div>
<div class="t" style="left:742px;width:300px;text-align:center;top:864.88px;font-size:11.6px;line-height:15px;color:#fff;font-weight:400;letter-spacing:-0.6px;">SG</div>
<div class="t" style="left:912px;top:864.92px;font-size:12.65px;line-height:16px;color:#1f2937;font-weight:400;letter-spacing:0px;">Surya Garimella 04</div>
<div class="t" style="left:882px;top:888.19px;font-size:12.72px;line-height:17px;color:#5f6b7a;font-weight:400;letter-spacing:0px;">Waiting on Employee</div>
<svg style="left:1185px;top:877px" width="14" height="14" viewBox="0 0 14 14"><circle cx="7" cy="7" r="7" fill="#e8574d"/><rect x="6.1" y="3.2" width="1.8" height="4.6" rx="0.4" fill="#fff"/><rect x="6.1" y="9" width="1.8" height="1.8" rx="0.4" fill="#fff"/></svg>
<div class="t" style="left:1207px;top:876.62px;font-size:12.65px;line-height:16px;color:#1f2937;font-weight:400;letter-spacing:0px;">04 Jul 2024</div>
<div class="t" style="left:1504px;top:876.62px;font-size:12.65px;line-height:16px;color:#2b65c6;font-weight:400;letter-spacing:0px;">Remind</div>
<svg style="left:1684px;top:876px" width="6" height="14" viewBox="0 0 6 14"><circle cx="3" cy="2.5" r="1.45" fill="none" stroke="#7b8190" stroke-width="1"/><circle cx="3" cy="7.1" r="1.45" fill="none" stroke="#7b8190" stroke-width="1"/><circle cx="3" cy="11.7" r="1.45" fill="none" stroke="#7b8190" stroke-width="1"/></svg>
<div class="t" style="left:1608px;top:936.84px;font-size:12px;line-height:16px;color:#1f2937;font-weight:400;letter-spacing:-0.2px;">1 to 13 of 13</div>
<svg style="left:1706px;top:939px" width="10" height="11" viewBox="0 0 10 11"><path d="M1 0.5 V10.5" stroke="#d1d5db" stroke-width="1.2"/><path d="M8.5 1 L4 5.5 L8.5 10" fill="none" stroke="#d1d5db" stroke-width="1.1"/></svg>
<svg style="left:1734px;top:939px" width="7" height="11" viewBox="0 0 7 11"><path d="M5.5 1 L1.5 5.5 L5.5 10" fill="none" stroke="#d1d5db" stroke-width="1.1"/></svg>
<div class="t" style="left:1754px;top:936.84px;font-size:12px;line-height:16px;color:#1f2937;font-weight:400;letter-spacing:-0.2px;">Page 1 of 1</div>
<svg style="left:1827px;top:940px" width="7" height="11" viewBox="0 0 7 11"><path d="M1.5 1 L5.5 5.5 L1.5 10" fill="none" stroke="#d1d5db" stroke-width="1.1"/></svg>
<div class="t" style="left:1532px;top:848.77px;font-size:12.2px;line-height:16px;color:#1f2937;font-weight:400;letter-spacing:0px;">Keka CS-Demo</div>
<svg style="left:720px;top:700px" width="950" height="110" viewBox="0 0 950 110"><rect x="8.9" y="10.95" width="926.9" height="88.3" rx="5.5" fill="none" stroke="#5a48f3" stroke-width="3.6"/></svg>
<svg style="left:1837px;top:947px" width="10" height="14" viewBox="0 0 10 14"><g fill="#8db4e2"><circle cx="2" cy="2" r="1.6"/><circle cx="7.5" cy="2" r="1.6"/><circle cx="2" cy="7" r="1.6"/><circle cx="7.5" cy="7" r="1.6"/><circle cx="2" cy="12" r="1.6"/><circle cx="7.5" cy="12" r="1.6"/></g></svg>
<div class="a" style="left:1849px;top:932px;width:44px;height:44px;border-radius:50%;background:linear-gradient(180deg,#3877c0,#5546b8)"></div>
<svg style="left:1845px;top:928px" width="52" height="52" viewBox="0 0 52 52"><path d="M19.5 16.6 H33.2 Q36.9 16.6 36.9 20.3 V29" fill="none" stroke="#fff" stroke-width="1.2"/><rect x="15.4" y="18.2" width="19.2" height="15" rx="3.6" fill="#fff"/><path d="M22 32.8 L24.9 36.3 L27.8 32.8 Z" fill="#fff"/><text x="24.6" y="28.6" font-size="8.5" font-family="Liberation Sans" font-weight="700" fill="#4b5fbf" text-anchor="middle">?</text></svg>
<div class="a" style="left:1910px;top:51px;width:3px;height:942px;background:#f3f4f6"></div>
<div class="a" style="left:1910.6px;top:212px;width:2.4px;height:777px;background:#6b7280;border-radius:1px"></div>
<div class="a" style="left:0;top:0;width:1910px;height:51px;background:#205fc2"></div>
<div class="a" style="left:0;top:0;width:100px;height:51px;background:#154289"></div>
<div class="a" style="left:0;top:0;width:1913px;height:1px;background:#fde4da"></div>
<div class="t" style="left:11px;top:14.7px;font-size:24.4px;line-height:30px;font-weight:700;color:#fff;letter-spacing:0.3px;-webkit-text-stroke:0.6px #fff">keka</div>
<svg style="left:0;top:0" width="100" height="51" viewBox="0 0 100 51"><g stroke="#fff" stroke-linecap="round" fill="none"><path d="M63.4 19 L64.5 14.2" stroke-width="2.2"/><path d="M67 20.4 L71 15" stroke-width="2.4"/><path d="M70.6 23 L77.2 18.2" stroke-width="2.6"/><path d="M72.8 26.6 L79.4 24.8" stroke-width="2.4"/></g></svg>
<div class="t" style="left:118px;top:17.93px;font-size:13.2px;line-height:17px;color:#fff;font-weight:400;letter-spacing:0px;">Keka CS-Demo</div>
<div class="a" style="left:261px;top:8px;width:400px;height:36px;border-radius:18px;background:#fff"></div>
<svg style="left:270px;top:19px" width="16" height="16" viewBox="0 0 16 16"><circle cx="6.8" cy="6.8" r="5.4" fill="none" stroke="#7b8494" stroke-width="1.3"/><path d="M10.8 10.8 L14.3 14.3" stroke="#7b8494" stroke-width="1.4" stroke-linecap="round"/></svg>
<div class="t" style="left:293px;top:19.43px;font-size:12.6px;line-height:16px;color:#858e9c;font-weight:400;letter-spacing:0px;">Search employees or actions (Ex: Apply Leave)</div>
<div class="a" style="left:600px;top:16px;width:49px;height:20px;border-radius:10px;background:#eef0f3"></div>
<div class="t" style="left:474px;width:300px;text-align:center;top:17.84px;font-size:12px;line-height:16px;color:#1f2937;font-weight:400;letter-spacing:0px;">&#8984; + K</div>
<svg style="left:1673px;top:17px" width="20" height="22" viewBox="0 0 20 22"><path d="M10 2.6 C7 2.6 5.3 4.8 5.2 8 L5 12.4 L2.7 16 Q2.3 16.9 3.2 16.9 H16.8 Q17.7 16.9 17.3 16 L15 12.4 L14.8 8 C14.7 4.8 13 2.6 10 2.6 Z" fill="none" stroke="#fff" stroke-width="1.3" stroke-linejoin="round"/><path d="M8.4 19.3 Q10 21.2 11.6 19.3" fill="none" stroke="#fff" stroke-width="1.3" stroke-linecap="round"/><circle cx="10" cy="2.2" r="0.9" fill="#fff"/></svg>
<svg style="left:1710px;top:8px" width="40" height="34" viewBox="0 0 40 34"><g fill="none" stroke="#fff" stroke-width="1.35" stroke-linejoin="round" stroke-linecap="round"><path d="M14.7 21.3 C14.4 15.2 19.4 10.2 26.6 10.2 C26.8 17 21.8 22.4 16.8 23.3 Z"/><circle cx="21.3" cy="15.5" r="1.6"/><path d="M15.2 15.3 H10.2 C9 16.5 7.8 18.5 7 20.5 H13.6"/><path d="M21.6 21.3 V26.3 C20 27.5 18.2 28.8 16.6 29.6 L16.1 22.6"/><path d="M7.2 29.6 C6.7 26 9 23.2 12.6 23.4 C13.4 27.2 11 29.7 7.2 29.6 Z"/></g></svg>
<div class="a" style="left:1734px;top:12px;width:11px;height:11px;border-radius:50%;border:1px solid #f0706a;"></div>
<div class="a" style="left:1736px;top:14px;width:7px;height:7px;border-radius:50%;background:#ee5a4f"></div>
<svg style="left:1761px;top:18px" width="20" height="20" viewBox="0 0 20 20"><path fill="none" stroke="#fff" stroke-width="1.3" stroke-linejoin="round" d="M8.3 1.5 H11.7 L12.2 4 L14.2 5.1 L16.6 4.3 L18.3 7.2 L16.4 8.9 V11.1 L18.3 12.8 L16.6 15.7 L14.2 14.9 L12.2 16 L11.7 18.5 H8.3 L7.8 16 L5.8 14.9 L3.4 15.7 L1.7 12.8 L3.6 11.1 V8.9 L1.7 7.2 L3.4 4.3 L5.8 5.1 L7.8 4 Z"/><circle cx="10" cy="10" r="2.6" fill="none" stroke="#fff" stroke-width="1.3"/></svg>
<svg style="left:1804px;top:17px" width="22" height="22" viewBox="0 0 22 22"><circle cx="11" cy="11" r="9.8" fill="none" stroke="#fff" stroke-width="1.3"/><path d="M8.1 8.5 C8.1 6.6 9.4 5.6 11 5.6 C12.7 5.6 13.9 6.7 13.9 8.2 C13.9 10.4 11 10.5 11 12.8" fill="none" stroke="#fff" stroke-width="1.3" stroke-linecap="round"/><circle cx="11" cy="15.8" r="0.9" fill="#fff"/></svg>
<div class="a" style="left:1845px;top:16px;width:1px;height:20px;background:#8fb0e3"></div>
<div class="a" style="left:1862px;top:10px;width:32px;height:32px;border-radius:50%;background:repeating-linear-gradient(180deg,rgba(255,235,220,0.18) 0 1px,rgba(0,0,0,0) 1px 3px,rgba(70,35,20,0.2) 3px 4px),linear-gradient(180deg,#d2ae96,#b08068 50%,#74503d);overflow:hidden"><div style="position:absolute;left:-1px;top:8.5px;font:700 12.6px/14px 'Liberation Sans';color:#0d0d0d;letter-spacing:-0.4px;-webkit-text-stroke:0.5px #0d0d0d;top:9px">keka</div><div style="position:absolute;left:24px;top:8px;width:2px;height:4px;background:#86b35a;transform:rotate(20deg)"></div><div style="position:absolute;left:27px;top:11px;width:5px;height:2px;background:#4d66b0;transform:rotate(-30deg)"></div><div style="position:absolute;left:27px;top:14px;width:5px;height:2px;background:#8a4a86;transform:rotate(-15deg)"></div></div>
<div class="a" style="left:0;top:51px;width:100px;height:942px;background:#111c28"></div>
<div class="a" style="left:0;top:386px;width:100px;height:67px;background:#172a40"></div>
<div class="t" style="left:-100px;width:300px;text-align:center;top:89.36px;font-size:12.8px;line-height:17px;color:#818b9a;font-weight:400;letter-spacing:0px;">Home</div>
<div class="t" style="left:-100px;width:300px;text-align:center;top:156.26px;font-size:12.8px;line-height:17px;color:#818b9a;font-weight:400;letter-spacing:0px;">Me</div>
<div class="t" style="left:-100px;width:300px;text-align:center;top:223.36px;font-size:12.8px;line-height:17px;color:#818b9a;font-weight:400;letter-spacing:0px;">Inbox</div>
<div class="t" style="left:-100px;width:300px;text-align:center;top:290.36px;font-size:12.8px;line-height:17px;color:#818b9a;font-weight:400;letter-spacing:0px;">My Team</div>
<div class="t" style="left:-100px;width:300px;text-align:center;top:357.26px;font-size:12.8px;line-height:17px;color:#818b9a;font-weight:400;letter-spacing:0px;">My Finances</div>
<div class="t" style="left:-100px;width:300px;text-align:center;top:424.36px;font-size:12.8px;line-height:17px;color:#fff;font-weight:400;letter-spacing:0px;">Org</div>
<div class="t" style="left:-100px;width:300px;text-align:center;top:491.36px;font-size:12.8px;line-height:17px;color:#818b9a;font-weight:400;letter-spacing:0px;">Engage</div>
<div class="t" style="left:-100px;width:300px;text-align:center;top:558.36px;font-size:12.8px;line-height:17px;color:#818b9a;font-weight:400;letter-spacing:0px;">Hire</div>
<div class="t" style="left:-100px;width:300px;text-align:center;top:625.36px;font-size:12.8px;line-height:17px;color:#818b9a;font-weight:400;letter-spacing:0px;">Performance</div>
<div class="t" style="left:-100px;width:300px;text-align:center;top:696.26px;font-size:12.8px;line-height:17px;color:#818b9a;font-weight:400;letter-spacing:0px;">Project</div>
<div class="t" style="left:-100px;width:300px;text-align:center;top:763.36px;font-size:12.8px;line-height:17px;color:#818b9a;font-weight:400;letter-spacing:0px;">Time Attend</div>
<div class="t" style="left:-100px;width:300px;text-align:center;top:830.16px;font-size:12.8px;line-height:17px;color:#818b9a;font-weight:400;letter-spacing:0px;">Payroll</div>
<div class="t" style="left:-100px;width:300px;text-align:center;top:897.26px;font-size:12.8px;line-height:17px;color:#818b9a;font-weight:400;letter-spacing:0px;">Learn</div>
<div class="t" style="left:-100px;width:300px;text-align:center;top:964.36px;font-size:12.8px;line-height:17px;color:#818b9a;font-weight:400;letter-spacing:0px;">Apps</div>
<svg style="left:42.0px;top:68.0px" width="16" height="14" viewBox="0 0 16 14"><g fill="none" stroke="#838d9b" stroke-width="1.2" stroke-linecap="round" stroke-linejoin="round"><path d="M1.2 7 L8 1 L14.8 7"/><path d="M2.8 5.8 V12.8 H13.2 V5.8"/><path d="M6.3 12.8 V8.6 H9.7 V12.8"/></g></svg>
<svg style="left:42.0px;top:133.5px" width="16" height="17" viewBox="0 0 16 17"><g fill="none" stroke="#838d9b" stroke-width="1.2" stroke-linecap="round" stroke-linejoin="round"><circle cx="8" cy="4.6" r="3.6"/><path d="M1 16 V14.2 C1 11.8 3.5 10.4 8 10.4 C12.5 10.4 15 11.8 15 14.2 V16 Z"/></g></svg>
<svg style="left:41.5px;top:201.5px" width="17" height="15" viewBox="0 0 17 15"><g fill="none" stroke="#838d9b" stroke-width="1.2" stroke-linecap="round" stroke-linejoin="round"><path d="M1 7 L3.5 1 H13.5 L16 7 V14 H1 Z"/><path d="M1 7 H5.5 V9.5 H11.5 V7 H16"/></g></svg>
<svg style="left:41.0px;top:269.0px" width="18" height="14" viewBox="0 0 18 14"><g fill="none" stroke="#838d9b" stroke-width="1.1" stroke-linecap="round" stroke-linejoin="round"><circle cx="4" cy="2.1" r="1.9"/><circle cx="14" cy="2.1" r="1.9"/><circle cx="8.95" cy="5.7" r="2.5"/><path d="M4.2 13.6 C4.2 10.9 6.3 9.5 8.95 9.5 C11.6 9.5 13.7 10.9 13.7 13.6 Z"/><path d="M0.9 7.4 C1.3 6 2.5 5.2 4.9 5.3"/><path d="M17.1 7.4 C16.7 6 15.5 5.2 13.1 5.3"/></g></svg>
<svg style="left:41.0px;top:334.0px" width="18" height="18" viewBox="0 0 18 18"><g fill="none" stroke="#838d9b" stroke-width="1.2" stroke-linecap="round" stroke-linejoin="round"><circle cx="9" cy="9" r="8"/><path d="M11 6.6 C10.7 5.8 10 5.4 9 5.4 C7.8 5.4 7 6 7 6.9 C7 9 11.1 8.3 11.1 10.8 C11.1 11.8 10.2 12.5 9 12.5 C7.9 12.5 7.1 12 6.8 11.2"/><path d="M9 4.4 V5.4 M9 12.5 V13.5"/></g></svg>
<svg style="left:41.0px;top:402.5px" width="18" height="15" viewBox="0 0 18 15"><g fill="none" stroke="#dfe3ea" stroke-width="1.1" stroke-linecap="round" stroke-linejoin="round"><rect x="1.3" y="4.8" width="15.4" height="9.6" rx="2"/><path d="M5.8 4.8 V2 Q5.8 0.9 6.9 0.9 H11.1 Q12.2 0.9 12.2 2 V4.8"/><path d="M7.6 2.9 H10.4 M6.4 6.6 H11.6"/><path d="M7.7 14.4 V12 Q9 10.7 10.3 12 V14.4"/><rect x="3.2" y="7" width="1.5" height="1.5"/><rect x="3.2" y="10" width="1.5" height="1.5"/><circle cx="14.6" cy="7.8" r="0.8"/><circle cx="14.6" cy="11" r="0.8"/></g></svg>
<svg style="left:40.5px;top:467.5px" width="19" height="19" viewBox="0 0 19 19"><g fill="none" stroke="#838d9b" stroke-width="1.1" stroke-linecap="round" stroke-linejoin="round"><path d="M1.2 11 L2.2 8.3 A4.4 4.4 0 1 1 4.2 9.9 Z"/><path d="M3.2 3.2 H6.6 M3.2 5.2 H5.4"/><path d="M17.8 17.7 L16 14.6 A5.8 5.8 0 1 0 14.4 16.4 Z" fill="#111c28"/><path d="M12 14 L9.9 11.9 C9.1 11.1 9.6 9.6 10.8 9.6 C11.4 9.6 11.7 10 12 10.4 C12.3 10 12.6 9.6 13.2 9.6 C14.4 9.6 14.9 11.1 14.1 11.9 Z"/></g></svg>
<svg style="left:42.0px;top:536.5px" width="16" height="15" viewBox="0 0 16 15"><g fill="none" stroke="#838d9b" stroke-width="1.2" stroke-linecap="round" stroke-linejoin="round"><rect x="1" y="4" width="14" height="10" rx="1.8"/><path d="M5 4 V1.8 C5 1.3 5.4 1 5.9 1 H10.1 C10.6 1 11 1.3 11 1.8 V4"/><path d="M4 4 V14 M12 4 V14"/></g></svg>
<div class="a" style="left:56px;top:529px;width:12px;height:12px;border-radius:50%;background:#111c28;border:1.5px solid #4f8fd6"></div>
<div class="a" style="left:58.2px;top:531.2px;width:7.6px;height:7.6px;border-radius:50%;background:#6aa4e6"></div>
<svg style="left:41.0px;top:605.5px" width="18" height="11" viewBox="0 0 18 11"><g fill="none" stroke="#838d9b" stroke-width="1.2" stroke-linecap="round" stroke-linejoin="round"><path d="M1 10 L6.5 4.5 L10 7.5 L17 1"/><path d="M12.5 1 H17 V5.2"/></g></svg>
<svg style="left:43.0px;top:668.9px" width="13" height="17" viewBox="0 0 13 17"><g fill="none" stroke="#838d9b" stroke-width="1.1" stroke-linecap="round" stroke-linejoin="round"><path d="M3.6 2.9 H2.3 Q0.7 2.9 0.7 4.5 V15 Q0.7 16.5 2.3 16.5 H10.9 Q12.5 16.5 12.5 15 V4.5 Q12.5 2.9 10.9 2.9 H9.6"/><circle cx="6.6" cy="2.2" r="1.4"/><path d="M4 4.2 H9.2"/><path d="M3.4 8.6 H3.7 M3.4 11.6 H3.7 M5.9 8.6 H10.2 M5.9 11.6 H10.2" stroke-width="1.4"/></g></svg>
<svg style="left:41.5px;top:740.5px" width="17" height="17" viewBox="0 0 17 17"><g fill="none" stroke="#838d9b" stroke-width="1.1" stroke-linecap="round" stroke-linejoin="round"><circle cx="8.4" cy="9.4" r="6.8"/><path d="M8.3 5.9 V9.8 L11 11.8"/><path d="M0.7 4.6 C0.5 2.5 2.4 0.9 5.1 1.1"/><path d="M16.1 4.6 C16.3 2.5 14.4 0.9 11.7 1.1"/><path d="M3.1 14.2 L1.8 16.1 M13.7 14.2 L15 16.1"/></g></svg>
<svg style="left:41.5px;top:808.5px" width="17" height="15" viewBox="0 0 17 15"><g fill="none" stroke="#838d9b" stroke-width="1.1" stroke-linecap="round" stroke-linejoin="round"><rect x="0.85" y="0.55" width="15.9" height="11.2" rx="1.6"/><path d="M6.9 11.8 L4.8 14.4 M10 11.8 L12.1 14.4 M3.8 14.5 H13.2"/><path d="M10.1 4 C9.8 3.2 9.3 2.9 8.6 2.9 C7.7 2.9 7.1 3.4 7.1 4.2 C7.1 5.8 10.2 5.3 10.2 7.3 C10.2 8.2 9.5 8.9 8.6 8.9 C7.8 8.9 7.2 8.5 7 7.8"/></g></svg>
<svg style="left:41.0px;top:876.5px" width="18" height="13" viewBox="0 0 18 13"><g fill="none" stroke="#838d9b" stroke-width="1.2" stroke-linecap="round" stroke-linejoin="round"><path d="M9 1 L17 4.5 L9 8 L1 4.5 Z"/><path d="M4.2 6 V10 C4.2 11.5 6.5 12.2 9 12.2 C11.5 12.2 13.8 11.5 13.8 10 V6"/><path d="M1.5 5 V11.5"/></g></svg>
<svg style="left:41.5px;top:941.5px" width="17" height="17" viewBox="0 0 17 17"><g fill="none" stroke="#838d9b" stroke-width="1.1" stroke-linecap="round" stroke-linejoin="round"><rect x="0.8" y="0.8" width="3.2" height="3.2" rx="0.7"/><rect x="7.0" y="0.8" width="3.2" height="3.2" rx="0.7"/><rect x="13.2" y="0.8" width="3.2" height="3.2" rx="0.7"/><rect x="0.8" y="7.0" width="3.2" height="3.2" rx="0.7"/><rect x="7.0" y="7.0" width="3.2" height="3.2" rx="0.7"/><rect x="13.2" y="7.0" width="3.2" height="3.2" rx="0.7"/><rect x="0.8" y="13.2" width="3.2" height="3.2" rx="0.7"/><rect x="7.0" y="13.2" width="3.2" height="3.2" rx="0.7"/><rect x="13.2" y="13.2" width="3.2" height="3.2" rx="0.7"/></g></svg>
<div class="a" style="left:46px;top:188px;width:36px;height:16px;border-radius:8px;background:#e8584e"></div>
<div class="t" style="left:-86.2px;width:300px;text-align:center;top:189.00px;font-size:12.4px;line-height:16px;color:#fff;font-weight:400;letter-spacing:0.5px;">1267</div>
</div></body></html>
